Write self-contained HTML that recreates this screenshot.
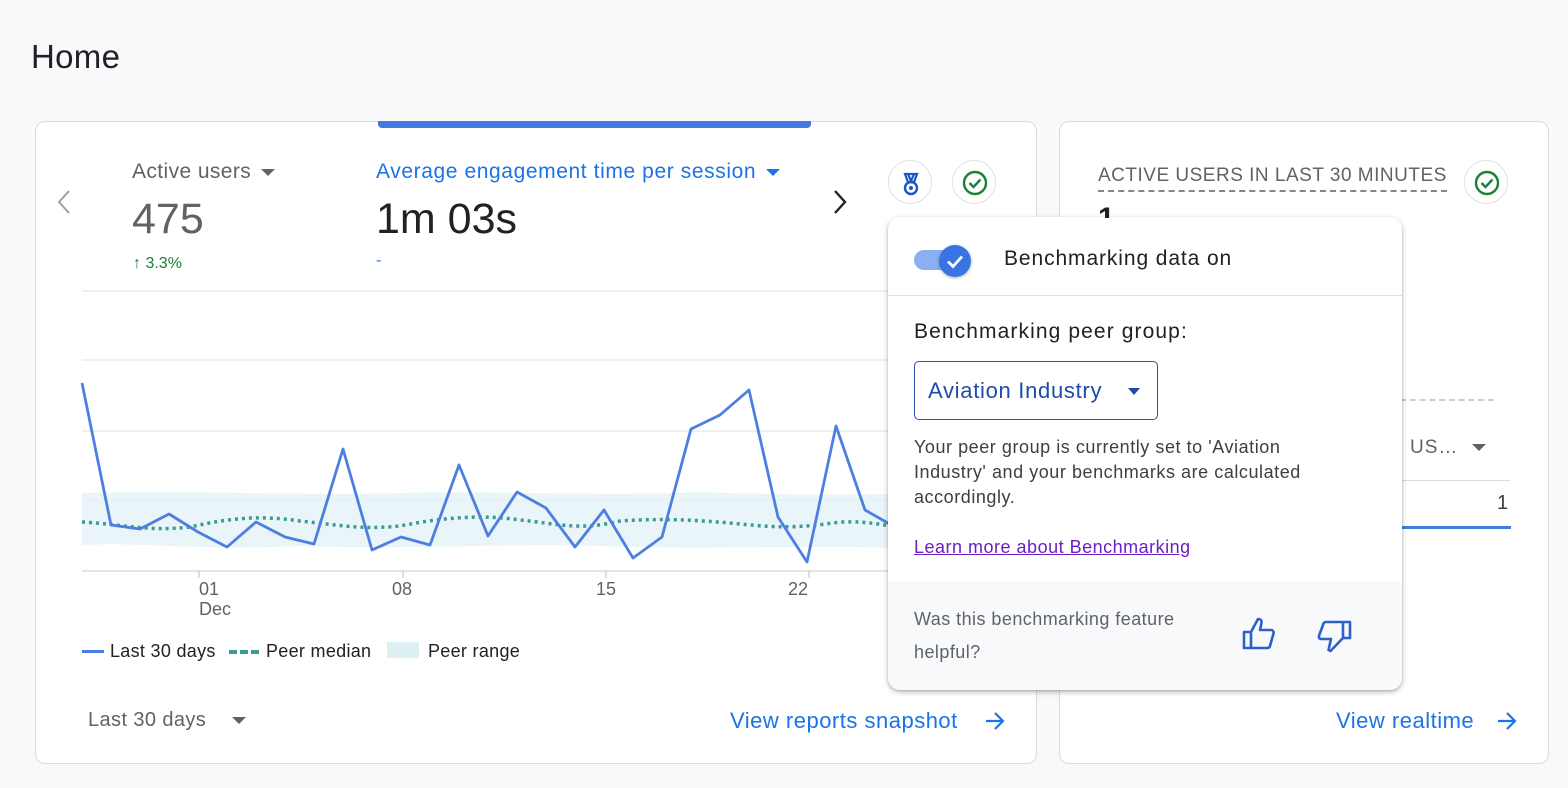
<!DOCTYPE html>
<html><head><meta charset="utf-8"><style>
*{box-sizing:border-box;margin:0;padding:0}
body{width:1568px;height:788px;background:#f8f9fa;font-family:"Liberation Sans",sans-serif;position:relative;overflow:hidden;color:#202124}
.abs{position:absolute}
.card{position:absolute;background:#fff;border:1px solid #dadce0;border-radius:10px}
.blue{color:#1a73e8}
.circ{position:absolute;width:44px;height:44px;border-radius:50%;border:1px solid #e0e0e0;background:#fff}
.tri{display:inline-block;width:0;height:0;border-left:7px solid transparent;border-right:7px solid transparent;border-top:7px solid currentColor;vertical-align:middle;margin-left:10px}
</style></head><body>
<div class="abs" style="left:31px;top:38px;font-size:33px;color:#202124;letter-spacing:.3px">Home</div>

<div class="card" style="left:35px;top:121px;width:1002px;height:643px"></div>
<div class="abs" style="left:378px;top:121px;width:433px;height:7px;background:#4479e1;border-radius:0 0 4px 4px"></div>
<svg class="abs" style="left:54px;top:188px" width="20" height="28"><path d="M15 3L5 14l10 11" fill="none" stroke="#9aa0a6" stroke-width="2"/></svg>
<div class="abs" style="left:132px;top:160px;font-size:21px;color:#5f6368;letter-spacing:.4px">Active users<span class="tri"></span></div>
<div class="abs" style="left:132px;top:195px;font-size:43px;color:#5f6368">475</div>
<div class="abs" style="left:133px;top:255px;font-size:16px;color:#188038">↑ 3.3%</div>
<div class="abs" style="left:376px;top:160px;font-size:21px;color:#1a73e8;letter-spacing:.6px">Average engagement time per session<span class="tri"></span></div>
<div class="abs" style="left:376px;top:195px;font-size:43px;color:#202124">1m 03s</div>
<div class="abs" style="left:376px;top:252px;font-size:16px;color:#1a73e8">-</div>
<svg class="abs" style="left:830px;top:188px" width="20" height="28"><path d="M5 3l10 11L5 25" fill="none" stroke="#202124" stroke-width="2.4"/></svg>
<div class="circ" style="left:888px;top:160px"><svg width="44" height="44" viewBox="0 0 44 44"><path d="M16 13h12l-3 8h-6z M19 13l3 7 3-7" fill="none" stroke="#1a56c8" stroke-width="2.2"/><circle cx="22" cy="27" r="6" fill="none" stroke="#1a56c8" stroke-width="2.4"/><circle cx="22" cy="27" r="2" fill="#1a56c8"/></svg></div>
<div class="circ" style="left:952px;top:160px"><svg width="44" height="44" viewBox="0 0 44 44"><circle cx="22" cy="22" r="11" fill="none" stroke="#188038" stroke-width="2.4"/><path d="M16.5 22l4 4 7-7.5" fill="none" stroke="#188038" stroke-width="2.4"/></svg></div>

<svg class="abs" style="left:0;top:0" width="1040" height="620">
<g stroke="#e0e0e0" stroke-width="1"><line x1="82" y1="291" x2="1010" y2="291"/><line x1="82" y1="360" x2="1010" y2="360"/><line x1="82" y1="431" x2="1010" y2="431"/><line x1="82" y1="500" x2="1010" y2="500"/><line x1="82" y1="571" x2="1010" y2="571" stroke="#c8c8c8"/></g>
<path d="M82 493 C200 490 300 496 400 493 C500 490 600 497 700 492 C800 496 850 494 900 494 L900 548 C800 545 700 550 600 546 C500 543 400 550 300 546 C200 551 150 542 82 545Z" fill="#e4f3f7" opacity=".8"/>
<path d="M82 522 C120 524 150 532 190 527 C230 518 260 515 300 521 C340 525 360 530 400 526 C440 518 480 514 520 520 C560 524 580 531 620 521 C660 518 700 520 740 524 C780 528 800 528 840 522 C870 521 880 525 900 527" fill="none" stroke="#3a9a95" stroke-width="3.5" stroke-dasharray="3 4"/>
<polyline points="82,383 111,525 140,529 169,514 198,532 227,547 256,522 285,537 314,544 343,449 372,550 401,537 430,545 459,465 488,536 517,492 546,508 575,547 604,510 633,558 662,537 691,429 720,415 749,390 778,517 807,562 836,426 865,510 900,530" fill="none" stroke="#4c7fe0" stroke-width="2.8" stroke-linejoin="round"/>
<g stroke="#bdbdbd"><line x1="199" y1="571" x2="199" y2="578"/><line x1="403" y1="571" x2="403" y2="578"/><line x1="606" y1="571" x2="606" y2="578"/><line x1="809" y1="571" x2="809" y2="578"/></g>
</svg>
<div class="abs" style="left:199px;top:579px;font-size:18px;color:#5f6368;line-height:20px">01<br>Dec</div>
<div class="abs" style="left:392px;top:579px;font-size:18px;color:#5f6368">08</div>
<div class="abs" style="left:596px;top:579px;font-size:18px;color:#5f6368">15</div>
<div class="abs" style="left:788px;top:579px;font-size:18px;color:#5f6368">22</div>

<div class="abs" style="left:82px;top:650px;width:22px;height:3px;background:#4c7fe0"></div>
<div class="abs" style="left:110px;top:641px;font-size:18px;letter-spacing:.3px">Last 30 days</div>
<div class="abs" style="left:229px;top:650px;width:30px;height:4px;border-top:4px dashed #3a9a95"></div>
<div class="abs" style="left:266px;top:641px;font-size:18px;letter-spacing:.3px">Peer median</div>
<div class="abs" style="left:387px;top:642px;width:32px;height:16px;background:#dff0f4"></div>
<div class="abs" style="left:428px;top:641px;font-size:18px;letter-spacing:.3px">Peer range</div>

<div class="abs" style="left:88px;top:709px;font-size:20px;color:#5f6368;letter-spacing:.4px">Last 30 days</div>
<div class="abs" style="left:222px;top:709px;font-size:20px;color:#5f6368"><span class="tri"></span></div>
<div class="abs blue" style="left:730px;top:708px;font-size:22px;letter-spacing:.5px">View reports snapshot</div>
<svg class="abs" style="left:984px;top:710px" width="22" height="22"><path d="M2 11h17M11 3l8 8-8 8" fill="none" stroke="#1a73e8" stroke-width="2.2"/></svg>

<div class="card" style="left:1059px;top:121px;width:490px;height:643px"></div>
<div class="abs" style="left:1098px;top:165px;font-size:19px;color:#5f6368;letter-spacing:.5px;border-bottom:2px dashed #80868b;padding-bottom:3px">ACTIVE USERS IN LAST 30 MINUTES</div>
<div class="circ" style="left:1464px;top:160px"><svg width="44" height="44" viewBox="0 0 44 44"><circle cx="22" cy="22" r="11" fill="none" stroke="#188038" stroke-width="2.4"/><path d="M16.5 22l4 4 7-7.5" fill="none" stroke="#188038" stroke-width="2.4"/></svg></div>
<div class="abs" style="left:1400px;top:399px;width:94px;border-top:2px dashed #ccc"></div>
<div class="abs" style="left:1410px;top:437px;font-size:19px;color:#5f6368;letter-spacing:1px">US…<span class="tri" style="margin-left:14px"></span></div>
<div class="abs" style="left:1400px;top:480px;width:110px;height:1px;background:#dadce0"></div>
<div class="abs" style="left:1497px;top:492px;font-size:20px;color:#3c4043">1</div>
<div class="abs" style="left:1400px;top:526px;width:111px;height:3px;background:#4479e1"></div>
<div class="abs blue" style="left:1336px;top:708px;font-size:22px;letter-spacing:.5px">View realtime</div>
<svg class="abs" style="left:1496px;top:710px" width="22" height="22"><path d="M2 11h17M11 3l8 8-8 8" fill="none" stroke="#1a73e8" stroke-width="2.2"/></svg>

<div class="abs" style="left:888px;top:217px;width:514px;height:473px;background:#fff;border-radius:12px;box-shadow:0 2px 6px rgba(0,0,0,.25),0 1px 2px rgba(0,0,0,.15);overflow:hidden">
 <div class="abs" style="left:26px;top:33px;width:42px;height:20px;border-radius:10px;background:#8ab0f3"></div>
 <div class="abs" style="left:51px;top:28px;width:32px;height:32px;border-radius:50%;background:#3a73e2;box-shadow:0 1px 3px rgba(0,0,0,.3)"><svg width="32" height="32"><path d="M9 16.5l5 5 9-10" fill="none" stroke="#fff" stroke-width="2.8"/></svg></div>
 <div class="abs" style="left:116px;top:30px;font-size:21px;color:#202124;letter-spacing:.9px">Benchmarking data on</div>
 <div class="abs" style="left:0;top:78px;width:514px;height:1px;background:#e0e0e0"></div>
 <div class="abs" style="left:26px;top:103px;font-size:21px;color:#202124;letter-spacing:1.1px">Benchmarking peer group:</div>
 <div class="abs" style="left:26px;top:144px;width:244px;height:59px;border:1.5px solid #2b4fa8;border-radius:5px"></div>
 <div class="abs" style="left:40px;top:161px;font-size:22px;color:#1f4ba8;letter-spacing:.7px">Aviation Industry</div>
 <div class="abs" style="left:240px;top:166px;color:#1f4ba8"><span class="tri" style="margin:0;border-width:7px 6px 0 6px"></span></div>
 <div class="abs" style="left:26px;top:218px;font-size:18px;line-height:25px;color:#3c4043;width:420px;letter-spacing:.55px">Your peer group is currently set to 'Aviation Industry' and your benchmarks are calculated accordingly.</div>
 <div class="abs" style="left:26px;top:320px;font-size:18px;color:#6a1fc4;text-decoration:underline;letter-spacing:.5px">Learn more about Benchmarking</div>
 <div class="abs" style="left:0;top:364px;width:514px;height:109px;background:#f8f9fa"></div>
 <div class="abs" style="left:26px;top:386px;font-size:18px;line-height:33px;color:#5f6368;width:300px;letter-spacing:.45px">Was this benchmarking feature helpful?</div>
 <svg class="abs" style="left:352px;top:398px" width="40" height="40" viewBox="0 0 40 40"><path d="M4 17h7v16H4z M11 17l7-13c3 0 4 2 3.5 4L20 15h11c2 0 3 2 2.5 3.5L30 31c-.4 1.3-1.5 2-2.7 2H11" fill="none" stroke="#2f5fcb" stroke-width="2.6" stroke-linejoin="round"/></svg>
 <svg class="abs" style="left:426px;top:400px" width="40" height="40" viewBox="0 0 40 40"><path d="M29 5h7v16h-7z M29 5H12c-1.3 0-2.3.7-2.7 2L5 19c-.5 1.5.5 3 2.5 3H17l-2.5 11 2 1L29 21" fill="none" stroke="#2f5fcb" stroke-width="2.6" stroke-linejoin="round"/></svg>
</div>
<div class="abs" style="left:1098px;top:204px;width:16px;height:14px;font-size:30px;line-height:30px;overflow:hidden;color:#202124;font-weight:bold">1</div>
</body></html>
